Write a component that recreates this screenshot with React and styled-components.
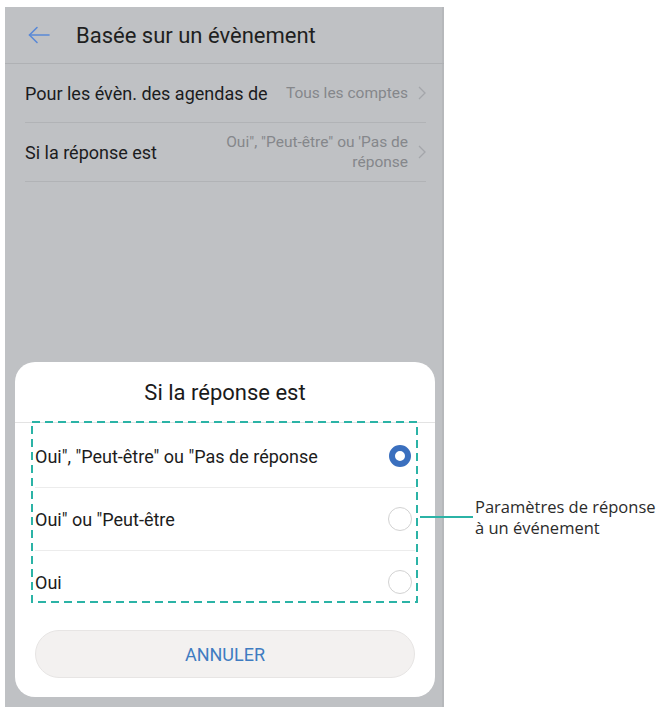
import styled, { createGlobalStyle } from 'styled-components';

const GlobalStyle = createGlobalStyle`
    html, body {
        margin: 0;
        padding: 0;
        background: #fff;
    }
    body {
        font-family: Roboto, 'Noto Sans', sans-serif;
    }
`

const options = [
    { label: 'Oui", "Peut-être" ou "Pas de réponse', checked: true },
    { label: 'Oui" ou "Peut-être', checked: false },
    { label: 'Oui', checked: false },
];

export default function App() {
    return (
        <Page>
            <GlobalStyle />
            <Phone>
                <Header>
                    <svg width="24" height="24" viewBox="0 0 24 24" fill="none" stroke="#5a89d6" strokeWidth="1.6" strokeLinecap="round" strokeLinejoin="round">
                        <path d="M22 12H2.5" />
                        <path d="M10 4.5L2.5 12L10 19.5" />
                    </svg>
                    <HeaderTitle>Basée sur un évènement</HeaderTitle>
                </Header>
                <SettingsList>
                    <SettingRow>
                        <SettingLabel>Pour les évèn. des agendas de</SettingLabel>
                        <SettingValue>
                            <ValueText>Tous les comptes</ValueText>
                            <Chevron />
                        </SettingValue>
                    </SettingRow>
                    <SettingRow>
                        <SettingLabel>Si la réponse est</SettingLabel>
                        <SettingValue>
                            <ValueText>Oui", "Peut-être" ou 'Pas de<br />réponse</ValueText>
                            <Chevron />
                        </SettingValue>
                    </SettingRow>
                </SettingsList>

                <Dialog>
                    <DialogTitle>Si la réponse est</DialogTitle>
                    <Options>
                        {options.map((o) => (
                            <Option key={o.label}>
                                <span>{o.label}</span>
                                <Radio $checked={o.checked} />
                            </Option>
                        ))}
                        <DashedBox>
                            <svg width="100%" height="100%">
                                <rect x="1" y="1" width="calc(100% - 2px)" height="calc(100% - 2px)" fill="none" stroke="#2bb3a6" strokeWidth="2" strokeDasharray="8 5" />
                            </svg>
                            <Callout>
                                <CalloutLine />
                                <CalloutText>
                                    Paramètres de réponse<br />à un événement
                                </CalloutText>
                            </Callout>
                        </DashedBox>
                    </Options>
                    <CancelButton>ANNULER</CancelButton>
                </Dialog>
            </Phone>
        </Page>
    )
};

function Chevron() {
    return (
        <ChevronIcon width="8" height="14" viewBox="0 0 8 14" fill="none" stroke="#a4a6aa" strokeWidth="1.3">
            <path d="M1 1l6 6-6 6" />
        </ChevronIcon>
    )
}

const Page = styled.div`
    display: flex;
    height: 707px;
    padding: 7px 0 0 5px;
    box-sizing: border-box;
    overflow: hidden;
`
const Phone = styled.div`
    position: relative;
    width: 439px;
    height: 700px;
    background-color: #bfc1c4;
    box-shadow: inset -2px 0 0 #b6b8bb;
`
const Header = styled.div`
    display: flex;
    align-items: center;
    height: 56px;
    padding-left: 22px;
    border-bottom: 1px solid #afb1b4;
`
const HeaderTitle = styled.h1`
    margin: 0 0 0 25px;
    font-size: 22px;
    font-weight: 400;
    color: #1e1f21;
`
const SettingsList = styled.div`
    padding: 0 18px 0 20px;
`
const SettingRow = styled.div`
    display: flex;
    align-items: center;
    justify-content: space-between;
    height: 58px;
    border-bottom: 1px solid #b1b3b6;
`
const SettingLabel = styled.span`
    font-size: 18px;
    color: #1b1c1e;
`
const SettingValue = styled.div`
    display: flex;
    align-items: center;
    gap: 10px;
`
const ValueText = styled.span`
    font-size: 15.5px;
    line-height: 20px;
    text-align: right;
    color: #85878b;
`
const ChevronIcon = styled.svg`
    flex-shrink: 0;
`
const Dialog = styled.div`
    position: absolute;
    left: 10px;
    right: 9px;
    bottom: 10px;
    display: flex;
    flex-direction: column;
    background-color: #fff;
    border-radius: 20px;
`
const DialogTitle = styled.div`
    display: flex;
    align-items: center;
    justify-content: center;
    height: 60px;
    font-size: 22px;
    color: #1a1a1a;
    border-bottom: 1px solid #e3e3e3;
`
const Options = styled.div`
    position: relative;
    margin: 2px 20px 0;
`
const Option = styled.div`
    display: flex;
    align-items: center;
    justify-content: space-between;
    height: 62px;
    padding-right: 3px;
    font-size: 18px;
    color: #1c1c1c;
    & + & {
        border-top: 1px solid #ececec;
    }
`
const Radio = styled.span`
    box-sizing: border-box;
    width: ${(p) => (p.$checked ? '22px' : '24px')};
    height: ${(p) => (p.$checked ? '22px' : '24px')};
    margin-right: ${(p) => (p.$checked ? '1px' : '0')};
    border-radius: 50%;
    border: ${(p) => (p.$checked ? '6px solid #3a6fbe' : '1.5px solid #d2d2d2')};
    background: #fff;
`
const DashedBox = styled.div`
    position: absolute;
    left: -4px;
    right: -3px;
    top: -4px;
    bottom: 10px;
    pointer-events: none;
    svg {
        display: block;
        overflow: visible;
    }
`
const Callout = styled.div`
    position: absolute;
    left: calc(100% + 2px);
    top: 75px;
    display: flex;
    align-items: center;
`
const CalloutLine = styled.div`
    width: 53px;
    height: 2px;
    background-color: #2bb3a6;
`
const CalloutText = styled.div`
    margin-left: 2px;
    font-family: 'Open Sans', sans-serif;
    font-size: 16.5px;
    line-height: 21px;
    color: #2b2b2b;
    white-space: nowrap;
`
const CancelButton = styled.button`
    margin: 17px 20px 19px;
    height: 48px;
    border: 1px solid #e7e5e4;
    border-radius: 24px;
    background-color: #f3f1f0;
    font-family: Roboto, sans-serif;
    font-size: 18px;
    color: #3f7cc1;
`
